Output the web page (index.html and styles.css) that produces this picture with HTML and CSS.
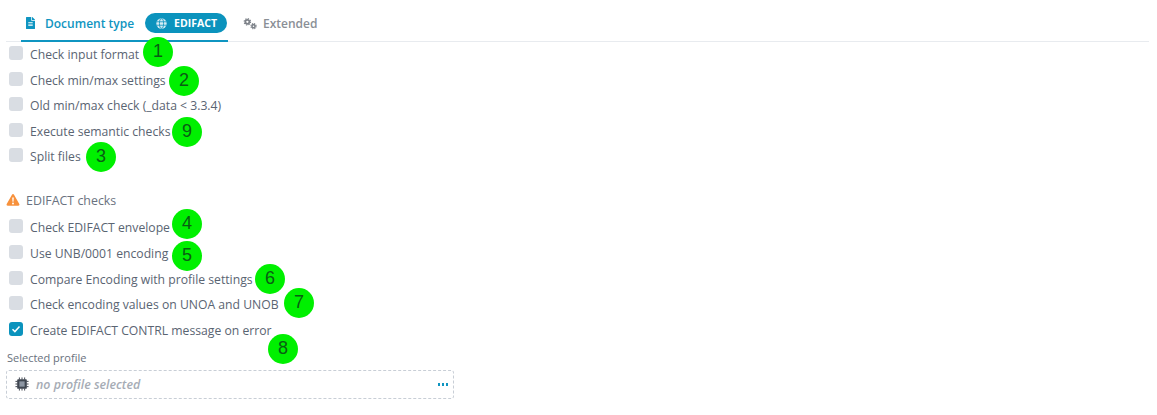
FILE: index.html
```html
<!DOCTYPE html>
<html lang="en">
<head>
    <meta charset="UTF-8">
    <title>Document type</title>
    <link rel="stylesheet" href="styles.css">
</head>
<body>
    <div class="tabs">
        <div class="tab active">
            <svg class="tab-icon" viewBox="0 0 384 512"><path fill="currentColor" d="M224 136V0H24C10.700 0 0 10.700 0 24v464c0 13.300 10.700 24 24 24h336c13.300 0 24-10.700 24-24V160H248c-13.200 0-24-10.800-24-24zm64 236c0 6.600-5.400 12-12 12H108c-6.600 0-12-5.400-12-12v-8c0-6.600 5.400-12 12-12h168c6.600 0 12 5.400 12 12v8zm0-64c0 6.600-5.400 12-12 12H108c-6.600 0-12-5.400-12-12v-8c0-6.600 5.400-12 12-12h168c6.600 0 12 5.400 12 12v8zm0-72v8c0 6.600-5.400 12-12 12H108c-6.600 0-12-5.400-12-12v-8c0-6.600 5.400-12 12-12h168c6.600 0 12 5.400 12 12zm96-114.100v6.100H256V0h6.100c6.400 0 12.500 2.500 17 7l97.900 98c4.500 4.500 7 10.600 7 16.900z"/></svg>
            <span>Document type</span>
            <span class="pill">
                <svg class="globe" viewBox="0 0 16 16"><circle cx="8" cy="8" r="7.500" fill="#d5ecf4"/><ellipse cx="8" cy="8" rx="3" ry="7" fill="none" stroke="#0b93bd" stroke-width="1.200"/><path d="M1 5.500h14M1 10.500h14" stroke="#0b93bd" stroke-width="1.200"/></svg>
                EDIFACT
            </span>
        </div>
        <div class="tab">
            <svg class="gears" viewBox="0 0 16 16"><g fill="none" stroke="currentColor"><circle cx="5" cy="5.500" r="2.300" stroke-width="2"/><circle cx="5" cy="5.500" r="3.700" stroke-width="1.200" stroke-dasharray="1.500 1.400"/><circle cx="12" cy="10.500" r="1.800" stroke-width="1.800"/><circle cx="12" cy="10.500" r="3" stroke-width="1.200" stroke-dasharray="1.300 1.100"/></g></svg>
            <span>Extended</span>
        </div>
    </div>

    <div class="checks">
        <label class="check"><span class="box"></span>Check input format</label>
        <label class="check"><span class="box"></span>Check min/max settings</label>
        <label class="check"><span class="box"></span>Old min/max check (_data &lt; 3.3.4)</label>
        <label class="check"><span class="box"></span>Execute semantic checks</label>
        <label class="check"><span class="box"></span>Split files</label>
    </div>

    <div class="section-title">
        <svg class="warn" viewBox="0 0 16 16"><path fill="#f7913c" d="M8 1.200c.5 0 .9.300 1.200.7l6 10.800c.5.900-.1 2-1.200 2H2c-1.100 0-1.700-1.100-1.200-2l6-10.800c.3-.4.700-.7 1.200-.7z"/><path fill="#fff" d="M7.100 5h1.800l-.3 5H7.400zM8 10.800a1.100 1.100 0 1 1 0 2.200 1.100 1.100 0 0 1 0-2.200z"/></svg>
        EDIFACT checks
    </div>

    <div class="checks second">
        <label class="check"><span class="box"></span>Check EDIFACT envelope</label>
        <label class="check"><span class="box"></span>Use UNB/0001 encoding</label>
        <label class="check"><span class="box"></span>Compare Encoding with profile settings</label>
        <label class="check"><span class="box"></span>Check encoding values on UNOA and UNOB</label>
        <label class="check"><span class="box checked"><svg viewBox="0 0 14 14"><path d="M3.500 7.300l2.400 2.300 4.600-5" fill="none" stroke="#fff" stroke-width="1.500"/></svg></span>Create EDIFACT CONTRL message on error</label>
    </div>

    <div class="field">
        <div class="field-label">Selected profile</div>
        <div class="picker">
            <svg class="chip" viewBox="0 0 16 16"><rect x="2.500" y="2.500" width="11" height="11" rx="1" fill="#3f4650"/><rect x="5" y="5" width="6" height="6" fill="#8d96a3"/><path d="M5 .5v15M8 .5v15M11 .5v15M.5 5h15M.5 8h15M.5 11h15" stroke="#3f4650" stroke-width="1.100" stroke-dasharray="2.500 10 2.500"/></svg>
            <span class="placeholder">no profile selected</span>
            <span class="dots"><i></i><i></i><i></i></span>
        </div>
    </div>

    <!-- numbered markers put on top of the screenshot -->
    <span class="marker m1">1</span>
    <span class="marker m2">2</span>
    <span class="marker m9">9</span>
    <span class="marker m3">3</span>
    <span class="marker m4">4</span>
    <span class="marker m5">5</span>
    <span class="marker m6">6</span>
    <span class="marker m7">7</span>
    <span class="marker m8">8</span>
</body>
</html>
```

FILE: styles.css
```css
body { margin: 0; background: #fff; color: #5a6472; font-family: "Open Sans", Arial, sans-serif; font-size: 12.2px; height: 415px; overflow: hidden; position: relative; }

.tabs { display: flex; margin-left: 6px; margin-right: 8px; border-bottom: 1px solid #e8ebef; box-sizing: border-box; height: 42px; }
.tab { display: flex; align-items: center; gap: 6px; font-weight: 600; font-size: 12px; color: #8a8f96; padding: 6px 4px 0 15px; }
.tab.active { color: #0f95c1; border-bottom: 2px solid #0f95c1; margin-bottom: -1px; width: 207px; box-sizing: border-box; padding: 6px 0 0 5px; margin-left: 15px; }
.tab-icon { width: 9px; height: 12px; margin-right: 4px; }
.pill { display: flex; align-items: center; gap: 7px; height: 20px; margin-left: 5px; padding: 0 10px 0 11px; border-radius: 10px; background: #0b93bd; color: #fff; font-size: 10.500px; font-weight: 700; }
.globe { width: 11px; height: 11px; }
.gears { width: 14px; height: 14px; color: #7d8289; }

.checks { display: flex; flex-direction: column; padding: 4px 0 0 9px; gap: 11.600px; }
.checks.second { padding-top: 12px; }
.check { display: flex; align-items: flex-start; gap: 7px; height: 14px; line-height: 18px; white-space: nowrap; }
.box { flex: none; display: block; width: 14px; height: 14px; border-radius: 3px; background: #d9dde3; }
.box.checked { background: #0b93bd; }
.box svg { display: block; }

.section-title { display: flex; align-items: center; gap: 6px; margin: 31px 0 0 6px; height: 14px; font-size: 12.400px; font-weight: 500; color: #6a7280; }
.warn { width: 14px; height: 14px; }

.field { margin: 15px 0 0 6px; width: 448px; }
.field-label { font-size: 11px; line-height: 14px; color: #69717d; margin: 0 0 5px 1px; }
.picker { display: flex; align-items: center; height: 29px; box-sizing: border-box; border: 1px dashed #c8ced6; border-radius: 3px; padding: 0 5px 0 8px; gap: 7px; }
.chip { width: 14px; height: 14px; }
.placeholder { flex: 1; font-style: italic; font-weight: 600; font-size: 12.400px; color: #a6acb5; }
.dots { display: flex; gap: 1.500px; }
.dots i { display: block; width: 2.500px; height: 2.500px; background: #0f95c1; }

.marker { position: absolute; width: 30px; height: 30px; border-radius: 50%; background: #00f000; color: #0a5c14; font-family: "Liberation Sans", Arial, sans-serif; font-size: 18px; line-height: 29px; text-align: center; }
.m1 { left: 143px; top: 37px; }
.m2 { left: 169px; top: 66px; }
.m9 { left: 172px; top: 117px; }
.m3 { left: 86px; top: 142px; }
.m4 { left: 172px; top: 209px; }
.m5 { left: 172px; top: 241px; }
.m6 { left: 255px; top: 264px; }
.m7 { left: 284px; top: 288px; }
.m8 { left: 268px; top: 334px; }
```
